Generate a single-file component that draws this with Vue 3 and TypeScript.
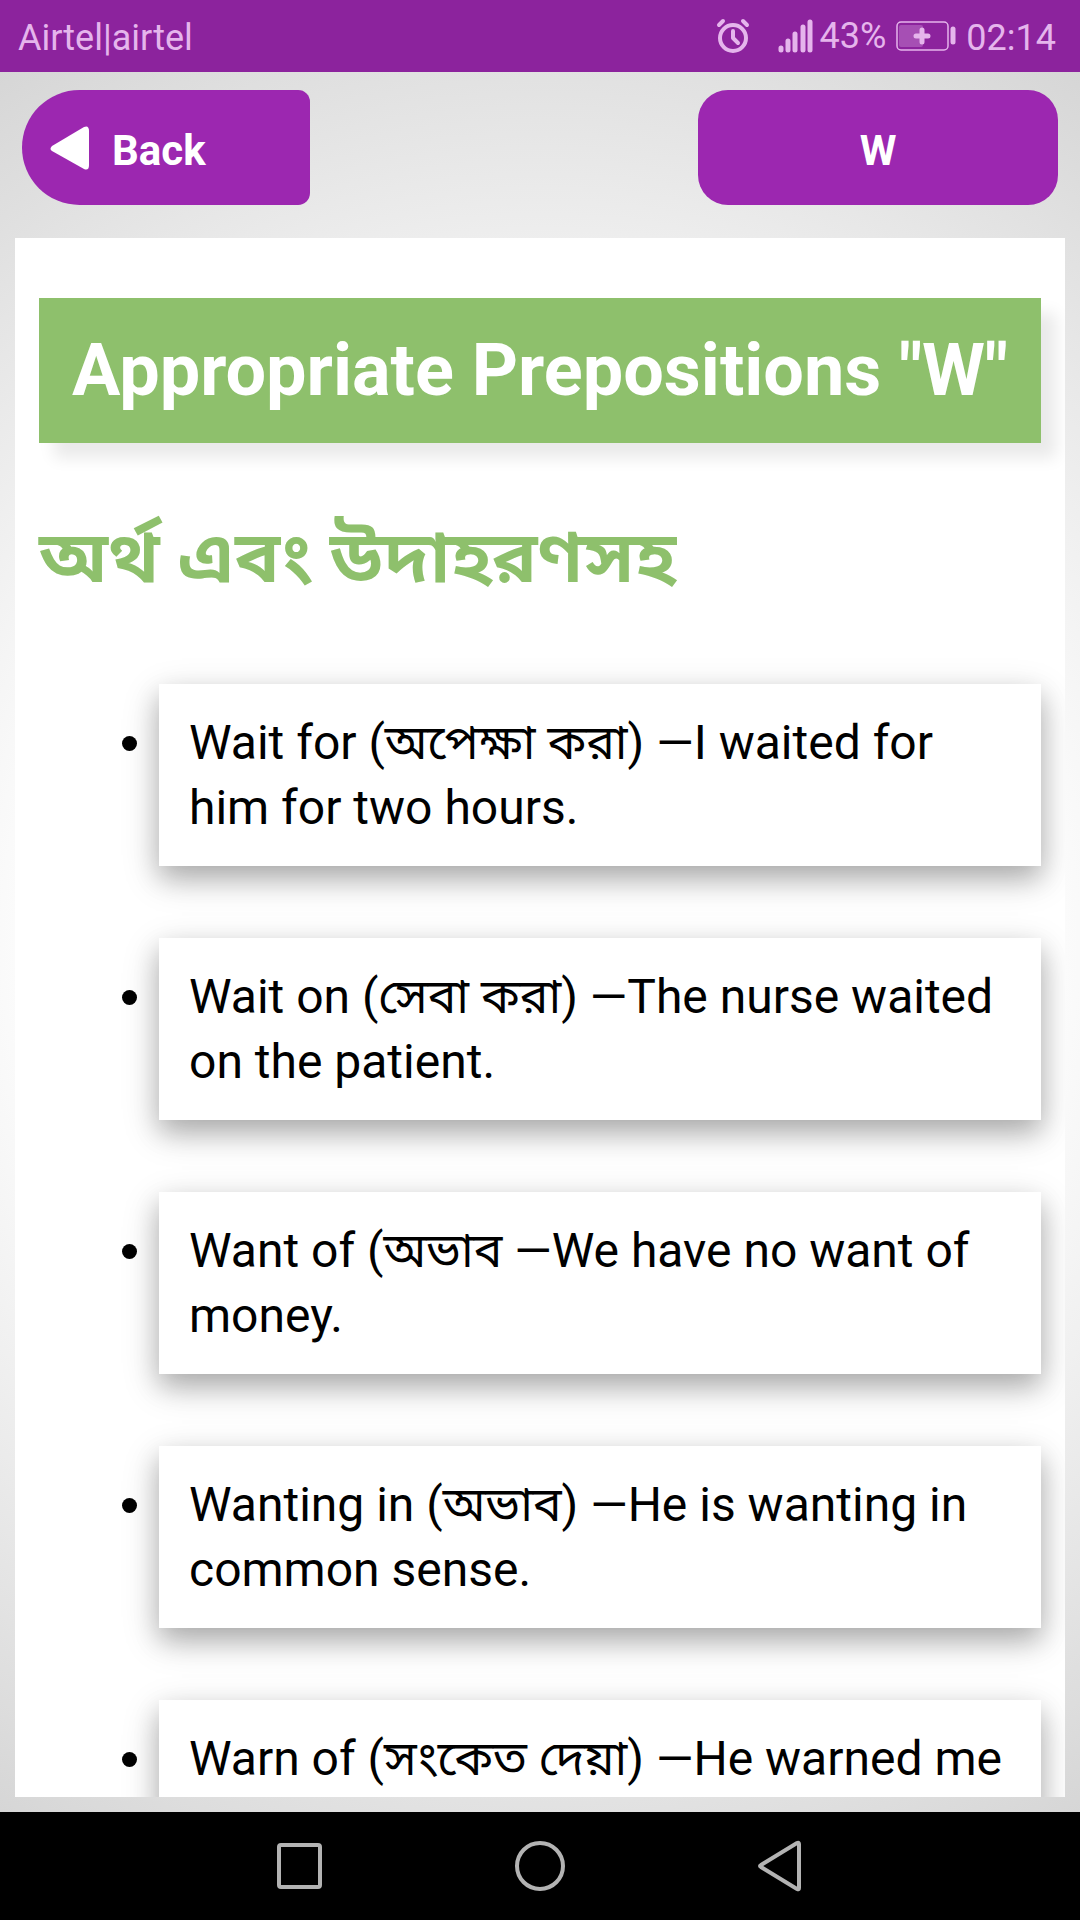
<script setup lang="ts">
const items: string[] = [
  'Wait for (অপেক্ষা করা) —I waited for him for two hours.',
  'Wait on (সেবা করা) —The nurse waited on the patient.',
  'Want of (অভাব —We have no want of money.',
  'Wanting in (অভাব) —He is wanting in common sense.',
  'Warn of (সংকেত দেয়া) —He warned me',
]
</script>

<template>
  <div class="screen">
    <header class="status">
      <span>Airtel|airtel</span>
      <div class="indicators">
        <svg class="alarm" width="34" height="36" viewBox="0 0 34 36" fill="none" stroke="currentColor" stroke-width="4" stroke-linecap="round" stroke-linejoin="round">
          <circle cx="17" cy="20" r="13" />
          <path d="M17 13v7l5 5M3 7l4-4M31 7l-4-4" />
        </svg>
        <svg width="36" height="34" viewBox="0 0 36 34" fill="none" stroke="currentColor" stroke-width="5" stroke-linecap="round">
          <path d="M3 29v2M10 22v9M17 15v16M25 8v23M32 3v28" />
        </svg>
        <span class="percent">43%</span>
        <svg class="battery" width="60" height="30" viewBox="0 0 60 30" fill="none" stroke="currentColor" stroke-linecap="round">
          <rect x="1" y="1" width="51" height="28" rx="4" stroke-width="1.5" />
          <rect x="3" y="4" width="24" height="22" rx="2" fill="currentColor" stroke="none" opacity=".3" />
          <path d="M20 15h12M26 9v12" stroke-width="5" />
          <path d="M57 8v13" stroke-width="5" />
        </svg>
        <span class="clock">02:14</span>
      </div>
    </header>
    <div class="content">
      <nav class="toolbar">
        <button class="back" type="button">
          <svg width="40" height="44" viewBox="0 0 40 44" fill="currentColor"><path d="M2 20 34 1q5-2 5 4v34q0 6-5 4L2 25q-3-2 0-5z" /></svg>
          <span>Back</span>
        </button>
        <button class="letter" type="button"><span>W</span></button>
      </nav>
      <main class="page">
        <h1>Appropriate Prepositions "W"</h1>
        <h2>অর্থ এবং উদাহরণসহ</h2>
        <ul>
          <li v-for="item in items" :key="item"><p>{{ item }}</p></li>
        </ul>
      </main>
    </div>
    <footer class="keys">
      <svg width="48" height="48" viewBox="0 0 48 48"><rect x="3" y="3" width="41" height="42" rx="2" /></svg>
      <svg width="52" height="52" viewBox="0 0 52 52"><circle cx="26" cy="26" r="23" /></svg>
      <svg width="48" height="52" viewBox="0 0 48 52"><path d="M41 3q2-1 2 1v44q0 2-2 1L5 27q-2-1 0-2z" /></svg>
    </footer>
  </div>
</template>

<style scoped>
.screen { height: 100vh; display: flex; flex-direction: column; overflow: hidden; font-family: Roboto, "Noto Sans Bengali UI", "Noto Sans Bengali", "Noto Sans", sans-serif; }
.status { flex: none; height: 72px; padding: 0 24px 0 18px; display: flex; align-items: center; justify-content: space-between; background: #8c239d; color: #e5b5ec; font-size: 36px; line-height: 42px; }
.status > span, .clock { padding-top: 4px; }
.indicators { display: flex; align-items: center; }
.alarm { margin-right: 28px; }
.percent { margin: 0 10px 0 6px; }
.battery { margin-right: 10px; }
.content { flex: 1; min-height: 0; display: flex; flex-direction: column; background: radial-gradient(circle, #fff 46%, #d6d6d6 100%); }
.toolbar { flex: none; display: flex; justify-content: space-between; padding: 18px 22px 33px; }
button { height: 115px; border: 0; color: #fff; background: #9c27b0; font: 700 42px Roboto, sans-serif; }
button span { padding-top: 6px; }
.back { width: 288px; display: flex; align-items: center; gap: 22px; padding: 0 28px; border-radius: 58px 12px 12px 58px; }
.letter { width: 360px; display: flex; align-items: center; justify-content: center; border-radius: 30px; }
.page { flex: 1; min-height: 0; overflow: hidden; margin: 0 15px 15px; padding: 60px 24px 0; background: #fff; }
h1 { margin: 0; padding: 31px 0 30px; text-align: center; white-space: nowrap; background: #8ec06c; color: #fff; font-size: 72px; line-height: 84px; box-shadow: 15px 15px 15px #eaeaea; }
h2 { margin: 66px 0 78px; color: #8ec06c; font-size: 72px; line-height: 97px; }
ul { margin: 0; padding: 0 0 0 120px; font-size: 48px; line-height: 65px; }
li { margin-bottom: 72px; }
p { margin: 0; padding: 26px 30px; background: #fff; box-shadow: 0 12px 24px rgba(0, 0, 0, .2), 0 12px 36px rgba(0, 0, 0, .19); }
.keys { flex: none; height: 108px; display: flex; align-items: center; justify-content: center; gap: 190px; background: #000; }
.keys svg { fill: none; stroke: #b3b3b3; stroke-width: 4; }
</style>
